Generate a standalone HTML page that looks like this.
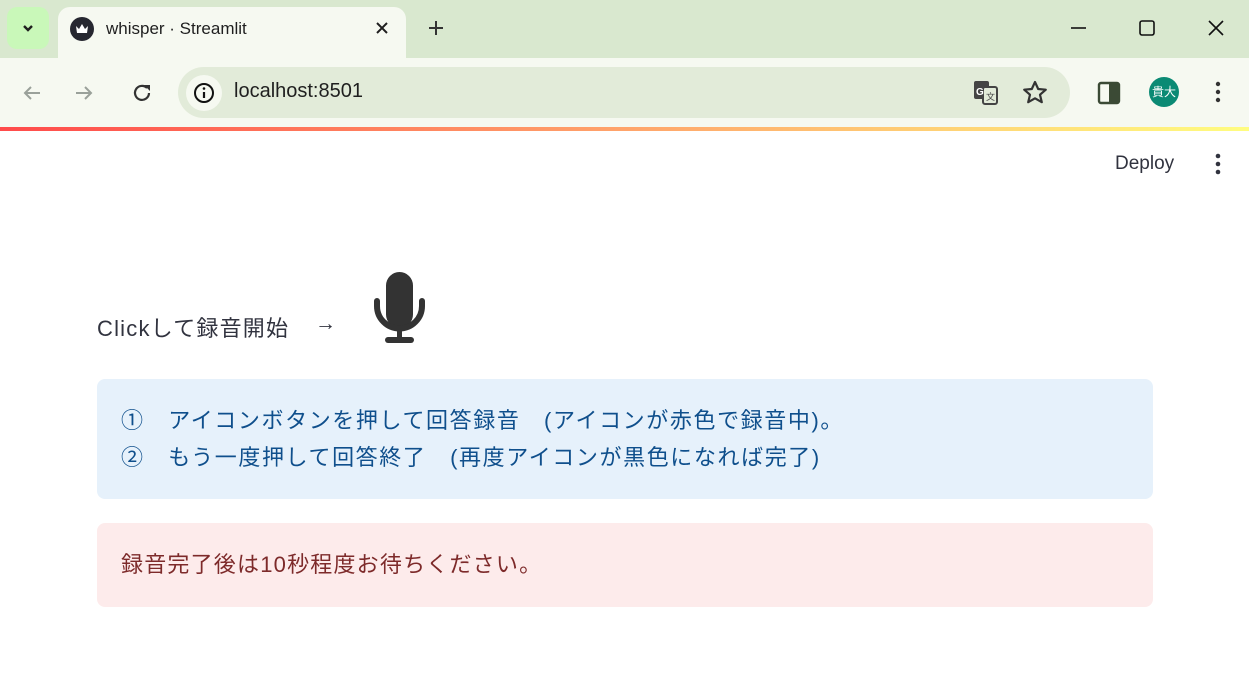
<!DOCTYPE html>
<html><head><meta charset="utf-8"><style>
*{margin:0;padding:0;box-sizing:border-box}
body{width:1249px;height:689px;overflow:hidden;background:#fff;font-family:"Liberation Sans","Noto Sans CJK JP",sans-serif;position:relative}
.tabbar{position:absolute;left:0;top:0;width:1249px;height:58px;background:#d9e8cf}
.tab{position:absolute;left:58px;top:7px;width:348px;height:51px;background:#f6f9f1;border-radius:12px 12px 0 0}
.toolbar{position:absolute;left:0;top:58px;width:1249px;height:70px;background:#f6f9f1}
.grad{position:absolute;left:0;top:127px;width:1249px;height:4px;background:linear-gradient(90deg,#ff4b4b,#ffa46b 50%,#fffd80)}
.omni{position:absolute;left:178px;top:67px;width:892px;height:51px;background:#e2ebd9;border-radius:26px}
.t{position:absolute;white-space:nowrap}
.box{position:absolute;left:97px;width:1056px;border-radius:8px}
.c{font-size:22px;letter-spacing:1.2px}
</style></head><body>
<div class="tabbar"></div>
<div style="position:absolute;left:7px;top:7px;width:42px;height:42px;background:#c9f8b9;border-radius:10px"></div>
<svg style="position:absolute;left:20px;top:20px" width="16" height="16"><path d="M4 6l4 4 4-4" stroke="#1f1f1f" stroke-width="2.4" fill="none"/></svg>
<div class="tab"></div>
<div style="position:absolute;left:70px;top:17px;width:24px;height:24px;border-radius:50%;background:#262730"></div>
<svg style="position:absolute;left:70px;top:17px" width="24" height="24"><path d="M6 9l3 3 3-5 3 5 3-3-1 7H7z" fill="#fff"/></svg>
<div class="t" style="left:106px;top:19px;font-size:17px;color:#1f1f1f">whisper · Streamlit</div>
<svg style="position:absolute;left:374px;top:20px" width="16" height="16"><path d="M3 3l10 10M13 3L3 13" stroke="#1f1f1f" stroke-width="2"/></svg>
<svg style="position:absolute;left:426px;top:18px" width="20" height="20"><path d="M10 3v14M3 10h14" stroke="#333" stroke-width="2"/></svg>
<svg style="position:absolute;left:1068px;top:18px" width="160" height="20"><path d="M3 10h15" stroke="#111" stroke-width="1.6"/><rect x="72" y="3" width="14" height="14" rx="2" fill="none" stroke="#111" stroke-width="1.6"/><path d="M141 3l14 14M155 3l-14 14" stroke="#111" stroke-width="1.6"/></svg>
<div class="toolbar"></div>
<div class="omni"></div>
<svg style="position:absolute;left:20px;top:81px" width="150" height="24"><path d="M20 12H5m6-6l-6 6 6 6" stroke="#9aa19a" stroke-width="2" fill="none"/><path d="M56 12h15m-6-6l6 6-6 6" stroke="#9aa19a" stroke-width="2" fill="none"/><path d="M127 7a7 7 0 1 0 2 5" stroke="#333" stroke-width="2.2" fill="none"/><path d="M124 4h6v6z" fill="#333"/></svg>
<div style="position:absolute;left:186px;top:75px;width:36px;height:36px;border-radius:50%;background:#f6f9f1"></div>
<svg style="position:absolute;left:192px;top:81px" width="24" height="24"><circle cx="12" cy="12" r="9" fill="none" stroke="#111" stroke-width="2"/><path d="M12 11v6" stroke="#111" stroke-width="2.2"/><circle cx="12" cy="7.5" r="1.3" fill="#111"/></svg>
<div class="t" style="left:234px;top:80px;font-size:20px;color:#1f1f1f">localhost:8501</div>
<svg style="position:absolute;left:972px;top:79px" width="30" height="28"><rect x="2" y="2" width="15" height="18" rx="2" fill="#444"/><rect x="11" y="8" width="14" height="17" rx="2" fill="#e2ebd9" stroke="#444" stroke-width="2"/><text x="4" y="16" font-size="10" fill="#fff" font-family="Liberation Sans" font-weight="bold">G</text><text x="14" y="21" font-size="9" fill="#444" font-family="Liberation Sans">文</text></svg>
<svg style="position:absolute;left:1021px;top:79px" width="28" height="28"><path d="M14 3l3.2 7 7.6.7-5.8 5 1.8 7.5L14 19.3l-6.8 3.9L9 15.7l-5.8-5 7.6-.7z" fill="none" stroke="#333" stroke-width="2.2" stroke-linejoin="round"/></svg>
<svg style="position:absolute;left:1097px;top:81px" width="24" height="24"><rect x="2" y="2" width="20" height="20" rx="2" fill="none" stroke="#3b4a35" stroke-width="2.4"/><rect x="12" y="2" width="10" height="20" fill="#3b4a35"/></svg>
<div style="position:absolute;left:1149px;top:77px;width:30px;height:30px;border-radius:50%;background:#0b8a74;color:#fff;font-size:12px;line-height:30px;text-align:center;font-family:'Noto Sans CJK JP',sans-serif">貴大</div>
<svg style="position:absolute;left:1210px;top:80px" width="16" height="26"><circle cx="8" cy="4" r="2.2" fill="#333"/><circle cx="8" cy="12" r="2.2" fill="#333"/><circle cx="8" cy="20" r="2.2" fill="#333"/></svg>
<div class="grad"></div>
<div class="t" style="left:1115px;top:153px;font-size:19px;color:#31333f">Deploy</div>
<svg style="position:absolute;left:1210px;top:151px" width="16" height="26"><circle cx="8" cy="5" r="2.3" fill="#31333f"/><circle cx="8" cy="13" r="2.3" fill="#31333f"/><circle cx="8" cy="21" r="2.3" fill="#31333f"/></svg>
<div class="t c" style="left:97px;top:311px;color:#31333f">Clickして録音開始</div>
<div class="t" style="left:315px;top:312px;font-size:21px;color:#31333f">→</div>
<svg style="position:absolute;left:370px;top:270px" width="58" height="76"><rect x="16" y="2" width="27" height="56" rx="13.5" fill="#333"/><path d="M7 31v5a22 22 0 0 0 45 0v-5" fill="none" stroke="#333" stroke-width="6" stroke-linecap="round"/><rect x="27" y="56" width="5" height="14" fill="#333"/><rect x="15" y="67" width="29" height="6" rx="3" fill="#333"/></svg>
<div class="box" style="top:379px;height:120px;background:#e6f1fb"></div>
<div class="t c" style="left:121px;top:402px;color:#0f4f8c;line-height:37px;letter-spacing:1.6px">①　アイコンボタンを押して回答録音　(アイコンが赤色で録音中)。<br>②　もう一度押して回答終了　(再度アイコンが黒色になれば完了)</div>
<div class="box" style="top:523px;height:84px;background:#fdebeb"></div>
<div class="t c" style="left:121px;top:547px;color:#7d2a2a">録音完了後は10秒程度お待ちください。</div>
</body></html>
